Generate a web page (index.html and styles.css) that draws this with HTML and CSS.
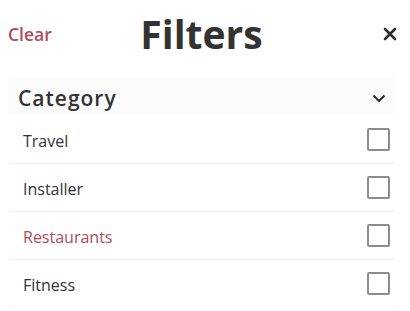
FILE: index.html
```html
<!DOCTYPE html>
<html>
<head>
<meta charset="utf-8">
<link rel="stylesheet" href="styles.css">
</head>
<body>
<div class="panel">
  <header class="head">
    <a class="clear">Clear</a>
    <h1 class="title">Filters</h1>
    <span class="close">
      <svg width="14" height="14" viewBox="0 0 14 14"><path d="M2 2 L12 12 M12 2 L2 12" stroke="#2b2b2b" stroke-width="2.6" stroke-linecap="round" fill="none"/></svg>
    </span>
  </header>
  <section class="group">
    <div class="group-head">
      <span class="group-title">Category</span>
      <svg class="chev" width="14" height="9" viewBox="0 0 14 9"><path d="M1.5 1.5 L7 7 L12.5 1.5" stroke="#2b2b2b" stroke-width="2" fill="none"/></svg>
    </div>
    <div class="row"><span class="label">Travel</span><span class="box"></span></div>
    <div class="row"><span class="label">Installer</span><span class="box"></span></div>
    <div class="row"><span class="label active">Restaurants</span><span class="box"></span></div>
    <div class="row"><span class="label">Fitness</span><span class="box"></span></div>
  </section>
</div>
</body>
</html>
```
FILE: styles.css
```css
html, body { margin: 0; padding: 0; background: #fff; }
body { font-family: "Open Sans", "Noto Sans", sans-serif; color: #333; }
.panel { padding: 0 15px 0 8px; }
.head {
  display: grid;
  grid-template-columns: 1fr auto 1fr;
  align-items: center;
  padding: 14px 0 23px;
  height: 40px;
}
.clear { font-size: 17.5px; font-weight: 600; color: #b04a5a; line-height: 40px; justify-self: start; }
.title { margin: 0; font-size: 39px; font-weight: 700; line-height: 40px; color: #333; }
.close { justify-self: end; display: flex; margin-right: -2px; }
.group-head {
  height: 38px;
  box-sizing: border-box;
  background: #fbfbfb;
  display: flex;
  align-items: center;
  justify-content: space-between;
  padding: 4px 9px 0 10px;
  border-radius: 4px 4px 0 0;
}
.group-title { font-size: 21px; font-weight: 600; letter-spacing: 1px; line-height: 34px; color: #333; }
.chev { margin-top: 0; }
.row {
  height: 48px;
  display: flex;
  align-items: center;
  justify-content: space-between;
  padding: 0 5px 0 15px;
  border-radius: 4px;
  box-shadow: 0 1px 1px rgba(0,0,0,0.07);
}
.label { font-size: 16px; color: #333; padding-top: 4px; }
.label.active { color: #b04a5a; }
.box {
  width: 19px; height: 19px;
  border: 2px solid #8c8c8c;
  border-radius: 2px;
}
```
